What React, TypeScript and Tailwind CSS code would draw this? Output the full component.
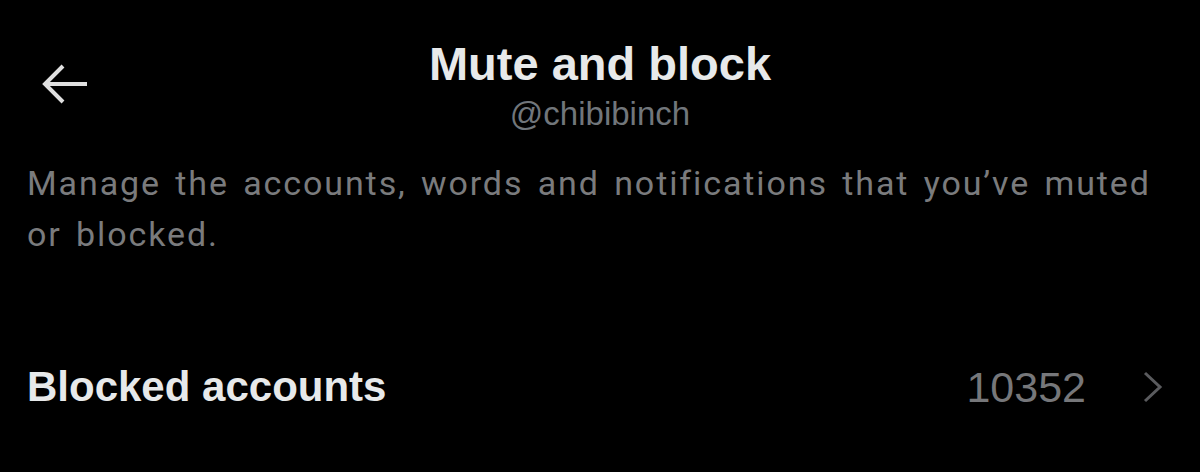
export default function App() {
  return (
    <div className="w-[1200px] h-[472px] bg-black overflow-hidden font-['Liberation_Sans',Arial,sans-serif]">
      <div className="grid grid-cols-[1fr_auto_1fr] items-start pt-[37px]">
        <div className="pl-[41px] pt-[26px]">
          <svg width="48" height="42" viewBox="0 0 48 42" fill="none" stroke="#e0e0e0" strokeWidth="4">
            <path d="M46 21H5" />
            <path d="M22 3 4 21l18 18" />
          </svg>
        </div>
        <div className="flex flex-col items-center">
          <h1 className="text-[47px] leading-[53px] font-bold text-[#e7e9ea]">Mute and block</h1>
          <div className="text-[33px] leading-[40px] text-[#71767b] mt-[4px]">@chibibinch</div>
        </div>
        <div />
      </div>

      <p className="px-[27px] pt-[24px] text-[34px] leading-[51px] tracking-[1.9px] [word-spacing:4px] text-[#7a7b7d] font-['Roboto',sans-serif] pr-[30px]">
        Manage the accounts, words and notifications that you’ve muted or blocked.
      </p>

      <div className="flex items-center justify-between pl-[27px] pr-[36px] pt-[103px]">
        <span className="text-[42px] leading-[48px] font-bold text-[#e7e9ea]">Blocked accounts</span>
        <div className="flex items-center gap-[56px]">
          <span className="text-[43px] leading-[48px] text-[#76777a]">10352</span>
          <svg width="22" height="32" viewBox="0 0 22 32" fill="none" stroke="#5a5b5e" strokeWidth="3">
            <path d="M3 2l15 14L3 30" />
          </svg>
        </div>
      </div>
    </div>
  )
}
